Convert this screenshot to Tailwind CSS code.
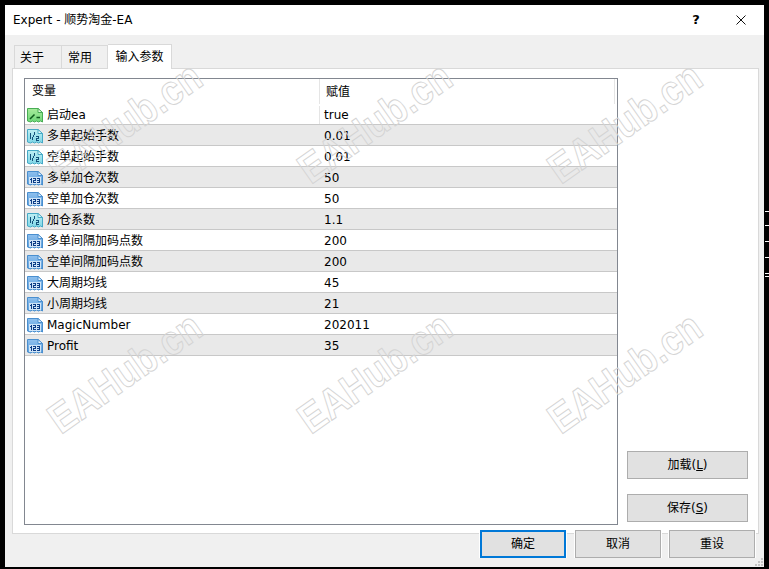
<!DOCTYPE html>
<html lang="zh">
<head>
<meta charset="UTF-8" />
<title>Expert - 顺势淘金-EA</title>
<script src="https://cdn.jsdelivr.net/npm/@tailwindcss/browser@4"></script>
</head>
<body class="w-[769px] h-[569px] bg-black overflow-hidden relative text-[12px] text-black font-['DejaVu_Sans','Noto_Sans_CJK_SC',sans-serif]">
  <svg class="absolute w-0 h-0">
    <defs>
      <linearGradient id="g-int" x1="0" y1="0" x2="0" y2="1"><stop offset="0" stop-color="#8fc0ee"/><stop offset="1" stop-color="#5c9fdc"/></linearGradient>
      <linearGradient id="g-dbl" x1="0" y1="0" x2="0" y2="1"><stop offset="0" stop-color="#bdeef3"/><stop offset="1" stop-color="#7fd6e6"/></linearGradient>
      <linearGradient id="g-bool" x1="0" y1="0" x2="0" y2="1"><stop offset="0" stop-color="#a8ec9c"/><stop offset="1" stop-color="#6ed678"/></linearGradient>
    </defs>
    <symbol id="page-int" viewBox="0 0 16 16">
      <path d="M.5 1.500h10.500l4.500 4v9.500l-2-1-2 1-2-1-2 1-2-1-2 1-3-1z" fill="url(#g-int)" stroke="#4a8fcf"/>
      <path d="M11 1.500v4h4.500z" fill="#e8f3fc" stroke="#4a8fcf"/>
      <rect x="2" y="7" width="12" height="7" fill="#cfe4f7"/>
      <path d="M4.500 8v5M3 9h1M6 8.500h3M8.500 8.500v2M6 10.500h3M6.500 10.500v2M6 12.500h3M10 8.500h3M12.500 8.500v4M10 10.500h3M10 12.500h3" fill="none" stroke="#0b3c86" shape-rendering="crispEdges"/>
    </symbol>
    <symbol id="page-dbl" viewBox="0 0 16 16">
      <path d="M.5 1.500h10.500l4.500 4v9.500l-2-1-2 1-2-1-2 1-2-1-2 1-3-1z" fill="url(#g-dbl)" stroke="#45a9c6"/>
      <path d="M11 1.500v4h4.500z" fill="#eafafb" stroke="#45a9c6"/>
      <path d="M3.500 5v6M2.500 6h1M5 12l3-8M8.500 8.500h3M11.500 8.500v2M8.500 10.500h3M9 10.500v2M8.500 12.500h3.500" fill="none" stroke="#12507a" shape-rendering="crispEdges"/>
    </symbol>
    <symbol id="page-bool" viewBox="0 0 16 16">
      <path d="M.5 1.500h10.500l4.500 4v9.500l-2-1-2 1-2-1-2 1-2-1-2 1-3-1z" fill="url(#g-bool)" stroke="#48ad55"/>
      <path d="M11 1.500v4h4.500z" fill="#e2f9dc" stroke="#48ad55"/>
      <path d="M3 12l4.500-4.500M9.500 10.500h3.500" fill="none" stroke="#0e5a1c" stroke-width="1.500"/>
    </symbol>
  </svg>

  <div class="absolute left-[5px] top-[5px] w-[759px] h-[562px] bg-[#f0f0f0] flex flex-col">
    <!-- title bar -->
    <div class="h-[30px] shrink-0 bg-white flex items-center pl-[8px]">
      <span class="flex-1">Expert - 顺势淘金-EA</span>
      <span class="w-[10px] text-center text-[13px] font-bold">?</span>
      <svg class="ml-[35px] mr-[18px]" width="10" height="10" viewBox="0 0 10 10"><path d="M.5.500l9 9M9.500.500l-9 9" stroke="#111" fill="none"/></svg>
    </div>

    <!-- tabs -->
    <div class="h-[33px] shrink-0 flex items-end pl-[9px]">
      <div class="w-[48px] h-[23px] pt-[2px] pl-[5px] bg-[#f0f0f0] border border-b-0 border-[#d9d9d9] flex items-center">关于</div>
      <div class="w-[46px] h-[23px] pt-[2px] pl-[6px] bg-[#f0f0f0] border border-b-0 border-l-0 border-[#d9d9d9] flex items-center">常用</div>
      <div class="w-[64px] h-[25px] -mb-px z-10 bg-white border border-b-0 border-l-0 border-[#d9d9d9] flex items-center justify-center">输入参数</div>
    </div>

    <!-- tab panel -->
    <div class="ml-[7px] w-[747px] h-[466px] shrink-0 bg-white border border-[#d9d9d9] pl-[11px] pt-[9px] flex">
      <!-- inputs list -->
      <div class="w-[594px] h-[447px] shrink-0 border border-[#828790] bg-white">
        <div class="h-[25px] grid grid-cols-[295px_1fr_3px] items-center">
          <span class="pl-[7px] border-r border-[#e5e5e5] leading-[25px]">变量</span>
          <span class="pl-[6px]">赋值</span>
          <span class="h-[25px] border-l border-[#e5e5e5]"></span>
        </div>
        <div class="h-[21px] pt-[2px] grid grid-cols-[295px_1fr] items-center border-b border-[#c8c8c8] bg-white"><span class="flex items-center gap-[4px] pl-[2px] border-r border-[#e5e5e5]"><svg width="16" height="16"><use href="#page-bool"/></svg>启动ea</span><span class="pl-[4px]">true</span></div>
        <div class="h-[21px] pt-[2px] grid grid-cols-[295px_1fr] items-center border-b border-[#c8c8c8] bg-[#e9e9e9]"><span class="flex items-center gap-[4px] pl-[2px]"><svg width="16" height="16"><use href="#page-dbl"/></svg>多单起始手数</span><span class="pl-[4px]">0.01</span></div>
        <div class="h-[21px] pt-[2px] grid grid-cols-[295px_1fr] items-center border-b border-[#c8c8c8] bg-white"><span class="flex items-center gap-[4px] pl-[2px]"><svg width="16" height="16"><use href="#page-dbl"/></svg>空单起始手数</span><span class="pl-[4px]">0.01</span></div>
        <div class="h-[21px] pt-[2px] grid grid-cols-[295px_1fr] items-center border-b border-[#c8c8c8] bg-[#e9e9e9]"><span class="flex items-center gap-[4px] pl-[2px]"><svg width="16" height="16"><use href="#page-int"/></svg>多单加仓次数</span><span class="pl-[4px]">50</span></div>
        <div class="h-[21px] pt-[2px] grid grid-cols-[295px_1fr] items-center border-b border-[#c8c8c8] bg-white"><span class="flex items-center gap-[4px] pl-[2px]"><svg width="16" height="16"><use href="#page-int"/></svg>空单加仓次数</span><span class="pl-[4px]">50</span></div>
        <div class="h-[21px] pt-[2px] grid grid-cols-[295px_1fr] items-center border-b border-[#c8c8c8] bg-[#e9e9e9]"><span class="flex items-center gap-[4px] pl-[2px]"><svg width="16" height="16"><use href="#page-dbl"/></svg>加仓系数</span><span class="pl-[4px]">1.1</span></div>
        <div class="h-[21px] pt-[2px] grid grid-cols-[295px_1fr] items-center border-b border-[#c8c8c8] bg-white"><span class="flex items-center gap-[4px] pl-[2px]"><svg width="16" height="16"><use href="#page-int"/></svg>多单间隔加码点数</span><span class="pl-[4px]">200</span></div>
        <div class="h-[21px] pt-[2px] grid grid-cols-[295px_1fr] items-center border-b border-[#c8c8c8] bg-[#e9e9e9]"><span class="flex items-center gap-[4px] pl-[2px]"><svg width="16" height="16"><use href="#page-int"/></svg>空单间隔加码点数</span><span class="pl-[4px]">200</span></div>
        <div class="h-[21px] pt-[2px] grid grid-cols-[295px_1fr] items-center border-b border-[#c8c8c8] bg-white"><span class="flex items-center gap-[4px] pl-[2px]"><svg width="16" height="16"><use href="#page-int"/></svg>大周期均线</span><span class="pl-[4px]">45</span></div>
        <div class="h-[21px] pt-[2px] grid grid-cols-[295px_1fr] items-center border-b border-[#c8c8c8] bg-[#e9e9e9]"><span class="flex items-center gap-[4px] pl-[2px]"><svg width="16" height="16"><use href="#page-int"/></svg>小周期均线</span><span class="pl-[4px]">21</span></div>
        <div class="h-[21px] pt-[2px] grid grid-cols-[295px_1fr] items-center border-b border-[#c8c8c8] bg-white"><span class="flex items-center gap-[4px] pl-[2px]"><svg width="16" height="16"><use href="#page-int"/></svg>MagicNumber</span><span class="pl-[4px]">202011</span></div>
        <div class="h-[21px] pt-[2px] grid grid-cols-[295px_1fr] items-center border-b border-[#c8c8c8] bg-[#e9e9e9]"><span class="flex items-center gap-[4px] pl-[2px]"><svg width="16" height="16"><use href="#page-int"/></svg>Profit</span><span class="pl-[4px]">35</span></div>
      </div>
      <!-- load / save -->
      <div class="ml-[9px] w-[121px] pt-[373px] flex flex-col gap-[15px]">
        <button class="h-[28px] bg-[#e1e1e1] border border-[#adadad]">加载(<u>L</u>)</button>
        <button class="h-[28px] bg-[#e1e1e1] border border-[#adadad]">保存(<u>S</u>)</button>
      </div>
    </div>

    <!-- dialog buttons -->
    <div class="flex justify-end gap-[8px] pr-[9px] -mt-[4px] z-10">
      <button class="w-[86px] h-[28px] mr-[1px] bg-[#e1e1e1] border-2 border-[#0078d7] shadow-[0_-1px_0_1px_white]">确定</button>
      <button class="w-[86px] h-[28px] bg-[#e1e1e1] border border-[#adadad] shadow-[0_-1px_0_1px_white]">取消</button>
      <button class="w-[86px] h-[28px] bg-[#e1e1e1] border border-[#adadad] shadow-[0_-1px_0_1px_white]">重设</button>
    </div>
    <!-- size grip -->
    <svg class="absolute right-[1px] bottom-[1px]" width="8" height="8" viewBox="0 0 8 8"><path d="M6 0h2v2H6zM3 3h2v2H3zM6 3h2v2H6zM0 6h2v2H0zM3 6h2v2H3zM6 6h2v2H6z" fill="#c4c4c4"/></svg>
  </div>

  <!-- watermark -->
  <div class="absolute inset-0 pointer-events-none font-['Liberation_Sans',sans-serif] font-bold text-[42px] leading-none text-transparent [-webkit-text-stroke:1px_#d4d4d4]">
    <span class="absolute left-[125px] top-[123px] -translate-x-1/2 -translate-y-1/2 -rotate-[35deg] scale-x-[0.88]">EAHub.cn</span>
    <span class="absolute left-[375px] top-[123px] -translate-x-1/2 -translate-y-1/2 -rotate-[35deg] scale-x-[0.88]">EAHub.cn</span>
    <span class="absolute left-[625px] top-[123px] -translate-x-1/2 -translate-y-1/2 -rotate-[35deg] scale-x-[0.88]">EAHub.cn</span>
    <span class="absolute left-[125px] top-[373px] -translate-x-1/2 -translate-y-1/2 -rotate-[35deg] scale-x-[0.88]">EAHub.cn</span>
    <span class="absolute left-[375px] top-[373px] -translate-x-1/2 -translate-y-1/2 -rotate-[35deg] scale-x-[0.88]">EAHub.cn</span>
    <span class="absolute left-[625px] top-[373px] -translate-x-1/2 -translate-y-1/2 -rotate-[35deg] scale-x-[0.88]">EAHub.cn</span>
  </div>

  <!-- ticks of the window behind -->
  <div class="absolute left-[765px] top-[211px] w-[4px] h-px bg-white"></div>
  <div class="absolute left-[765px] top-[225px] w-[4px] h-px bg-white"></div>
  <div class="absolute left-[765px] top-[241px] w-[4px] h-px bg-white"></div>
  <div class="absolute left-[765px] top-[257px] w-[4px] h-px bg-white"></div>
  <div class="absolute left-[765px] top-[273px] w-[4px] h-px bg-white"></div>
  <div class="absolute left-[765px] top-[276px] w-[4px] h-px bg-white"></div>
</body>
</html>
